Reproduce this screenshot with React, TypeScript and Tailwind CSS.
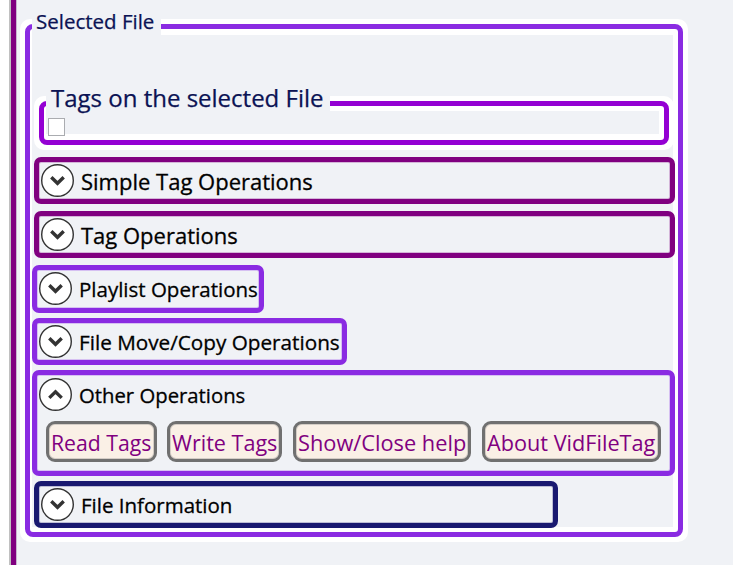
import type { ReactNode } from "react";

const font = "font-['Open_Sans','Noto_Sans',sans-serif]";

function Label({ children, className }: { children: ReactNode; className: string }) {
  return <span className={`inline-block origin-left whitespace-nowrap ${className}`}>{children}</span>;
}

function Toggle({ up = false }: { up?: boolean }) {
  return (
    <svg width="33" height="33" viewBox="0 0 33 33" className="shrink-0">
      <circle cx="16.5" cy="16.5" r="15.8" fill="#fff" stroke="#333" strokeWidth="1.4" />
      <path d={up ? "M10.3 19.9 16.5 13.9 22.7 19.9" : "M10.3 13.3 16.5 19.3 22.7 13.3"} fill="none" stroke="#333" strokeWidth="3.4" />
    </svg>
  );
}

function Expander({ title, className, textClass, up, children }: { title: string; className: string; textClass: string; up?: boolean; children?: ReactNode }) {
  return (
    <section className={`shrink-0 rounded-[7px] border-5 bg-[#f0f2f6] ${className}`}>
      <div className={`flex items-center gap-[7px] pl-[2px] ${up ? "h-[38px]" : "h-[37px]"}`}>
        <Toggle up={up} />
        <Label className={`[-webkit-text-stroke:0.3px_black] ${textClass}`}>{title}</Label>
      </div>
      {children}
    </section>
  );
}

function ActionButton({ children, className, textClass }: { children: ReactNode; className: string; textClass: string }) {
  return (
    <button className={`flex h-[41px] shrink-0 items-center rounded-[9px] border-3 border-[#707070] bg-[#faf0e6] pl-[2px] pt-[2px] text-[22px] text-[#800080] shadow-[inset_0_0_0_1px_#d4cdc6] ${className}`}>
      <Label className={textClass}>{children}</Label>
    </button>
  );
}

export default function App() {
  return (
    <div className={`flex h-[565px] w-[733px] overflow-hidden bg-white pl-[9px] text-black ${font}`}>
      <div className="w-[8px] shrink-0 border-l-2 border-r border-l-[#c0c0c0] border-r-[#c8b8cf] bg-[#800080]" />
      <main className="flex-1 bg-[#f0f2f6] pl-[3px] pt-[19px]">
        <div className="relative h-[523px] w-[668px] rounded-[10px] bg-white p-[5px]">
          <div className="absolute -top-[14px] left-[12px] h-[30px] w-[129px] bg-[#f0f2f6] pl-[4px] text-[20.5px] leading-[32px] text-[#0b1354]">
            <Label className="[-webkit-text-stroke:0.25px_#0b1354]">Selected File</Label>
          </div>
          <div className="h-[513px] rounded-[8px] border-5 border-[#8a2be2] bg-white pl-[2px] pr-[5px] pt-[6px]">
            <div className="flex h-[492px] flex-col items-start bg-[#f0f2f6] pt-[61px]">
              <div className="relative ml-[2px] h-[54px] w-[640px] shrink-0 rounded-[10px] bg-white p-[5px]">
                <div className="absolute -top-[15px] left-[12px] h-[31px] w-[284px] bg-[#f0f2f6] pl-[5px] text-[24px] leading-[34px] text-[#0b1354]">
                  <Label className="[-webkit-text-stroke:0.25px_#0b1354]">Tags on the selected File</Label>
                </div>
                <div className="h-[44px] w-[630px] rounded-[8px] border-5 border-[#9400d3] bg-white pl-[2px] pr-[5px] pt-[5px]">
                  <div className="h-[23px] bg-[#f0f2f6] pl-[2px] pt-[7px]">
                    <div className="h-[18px] w-[17px] border border-[#aaacb0] bg-white" />
                  </div>
                </div>
              </div>
              <Expander title="Simple Tag Operations" className="ml-[2px] mt-[7px] h-[47px] w-[641px] border-[#800080] shadow-[inset_0_0_0_1px_#d4b5d9]" textClass="text-[22px] relative top-px" />
              <Expander title="Tag Operations" className="ml-[2px] mt-[7px] h-[47px] w-[641px] border-[#800080] shadow-[inset_0_0_0_1px_#d4b5d9]" textClass="text-[22px] relative top-px" />
              <Expander title="Playlist Operations" className="mt-[7px] h-[48px] w-[232px] border-[#8a2be2] shadow-[inset_0_0_0_1px_#d6c0f2]" textClass="text-[20.5px] relative top-px" />
              <Expander title="File Move/Copy Operations" className="mt-[5px] h-[47px] w-[315px] border-[#8a2be2] shadow-[inset_0_0_0_1px_#d6c0f2]" textClass="text-[20.5px] scale-x-[1.01] relative top-px" />
              <Expander title="Other Operations" up className="mt-[5px] h-[106px] w-[643px] border-[#8a2be2] shadow-[inset_0_0_0_1px_#d6c0f2]" textClass="text-[20.5px] scale-x-[0.99] relative top-px">
                <div className="flex pl-[9px] pt-[8px]">
                  <ActionButton className="w-[111px]" textClass="scale-x-[0.965]">Read Tags</ActionButton>
                  <ActionButton className="ml-[10px] w-[115px]" textClass="scale-x-[0.98]">Write Tags</ActionButton>
                  <ActionButton className="ml-[11px] w-[178px]" textClass="scale-x-[0.99]">Show/Close help</ActionButton>
                  <ActionButton className="ml-[11px] w-[179px]" textClass="scale-x-[0.985]">About VidFileTag</ActionButton>
                </div>
              </Expander>
              <Expander title="File Information" className="ml-[2px] mt-[5px] h-[47px] w-[524px] border-[#191970] shadow-[inset_0_0_0_1px_#bcbdd5]" textClass="text-[20.5px] relative top-px" />
            </div>
          </div>
        </div>
      </main>
    </div>
  );
}
